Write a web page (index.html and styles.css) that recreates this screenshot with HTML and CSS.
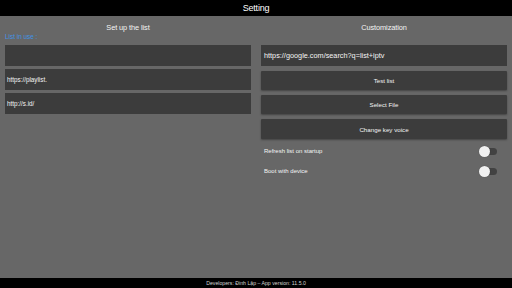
FILE: index.html
```html
<!DOCTYPE html>
<html lang="en">
<head>
  <meta charset="UTF-8" />
  <title>Setting</title>
  <link rel="stylesheet" href="styles.css">
</head>
<body>
  <header class="topbar">Setting</header>

  <main class="panels">
    <section class="panel">
      <div class="panel-head">
        <h2>Set up the list</h2>
        <span class="in-use">List in use :</span>
      </div>
      <div class="list-box"></div>
      <div class="list-box">https://playlist.</div>
      <div class="list-box">http://s.id/</div>
    </section>

    <section class="panel">
      <div class="panel-head">
        <h2>Customization</h2>
      </div>
      <div class="url-box">https://google.com/search?q=list+iptv</div>
      <button class="action-btn">Test list</button>
      <button class="action-btn">Select File</button>
      <button class="action-btn last">Change key voice</button>

      <div class="switch-row">
        <span>Refresh list on startup</span>
        <span class="switch"><span class="thumb"></span></span>
      </div>
      <div class="switch-row">
        <span>Boot with device</span>
        <span class="switch"><span class="thumb"></span></span>
      </div>
    </section>
  </main>

  <footer class="bottombar">Developers: Đinh Lập – App version: 11.5.0</footer>
</body>
</html>
```

FILE: styles.css
```css
* {
  box-sizing: border-box;
}

body {
  margin: 0;
  width: 512px;
  height: 288px;
  display: flex;
  flex-direction: column;
  background: #676767;
  color: #f4f4f4;
  font-family: 'Liberation Sans', Arial, sans-serif;
  overflow: hidden;
}

.topbar {
  height: 16px;
  background: #000;
  color: #fff;
  font-size: 9px;
  line-height: 16px;
  text-align: center;
  letter-spacing: -0.2px;
}

.panels {
  flex: 1;
  display: grid;
  grid-template-columns: 1fr 1fr;
  gap: 10px;
  padding: 0 5px;
}

.panel {
  display: flex;
  flex-direction: column;
}

.panel-head {
  height: 29px;
}

.panel-head h2 {
  margin: 0;
  padding-top: 7px;
  font-size: 7.4px;
  font-weight: normal;
  text-align: center;
  line-height: 9px;
  letter-spacing: -0.1px;
}

.in-use {
  display: block;
  margin-top: 1px;
  font-size: 6.4px;
  line-height: 7px;
  color: #3f93e6;
}

.list-box {
  height: 21px;
  margin-bottom: 3px;
  padding-left: 2px;
  background: #3c3c3c;
  font-size: 6.3px;
  line-height: 21px;
}

.url-box {
  height: 21px;
  margin-bottom: 5px;
  padding-left: 3px;
  background: #3c3c3c;
  font-size: 7.3px;
  line-height: 21px;
}

.action-btn {
  height: 19px;
  margin: 0 0 5px;
  border: none;
  border-radius: 1px;
  background: #3c3c3c;
  color: #f4f4f4;
  font-family: inherit;
  font-size: 6.2px;
  box-shadow: 0 1px 2px rgba(0,0,0,0.35);
}

.action-btn.last {
  height: 20px;
  margin-bottom: 2px;
}

.switch-row {
  height: 20px;
  display: flex;
  align-items: center;
  justify-content: space-between;
  padding: 0 10px 0 3px;
  font-size: 6px;
}

.switch {
  position: relative;
  width: 17px;
  height: 7px;
  border-radius: 4px;
  background: #424242;
}

.thumb {
  position: absolute;
  left: -1px;
  top: -2px;
  width: 11px;
  height: 11px;
  border-radius: 50%;
  background: #f1f1f1;
  box-shadow: 0 0 1px rgba(0,0,0,0.4);
}

.bottombar {
  height: 10px;
  background: #000;
  color: #d4d4d4;
  font-size: 5.2px;
  line-height: 10px;
  text-align: center;
}
```
